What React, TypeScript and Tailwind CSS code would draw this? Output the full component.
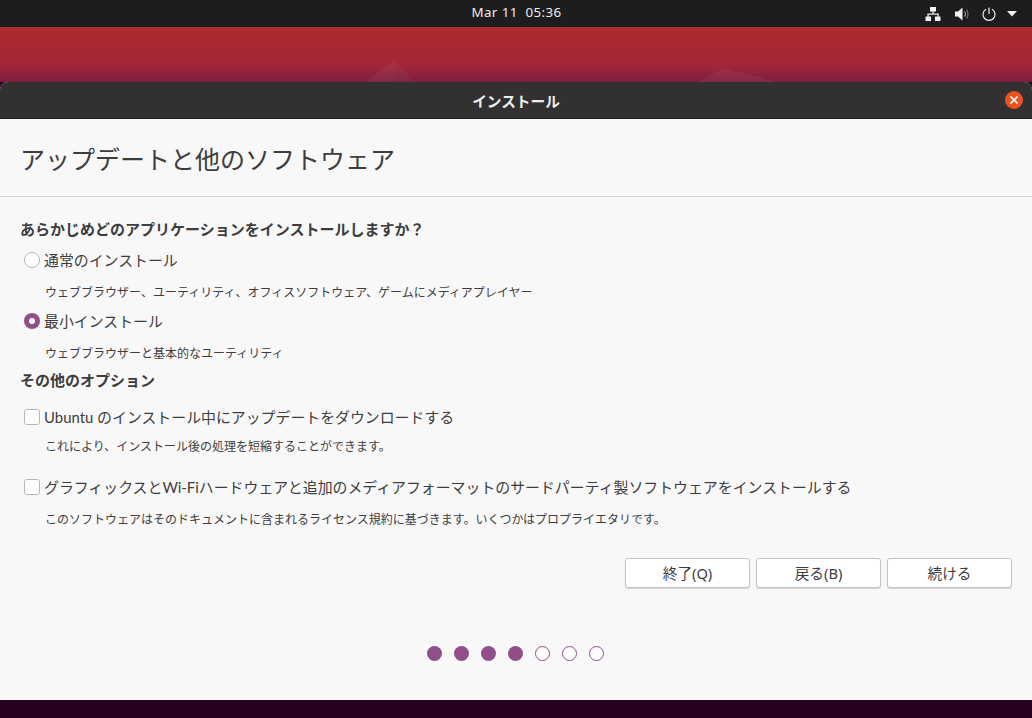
import React from "react";

const cjk = "font-['Noto_Sans','Noto_Sans_CJK_JP',sans-serif]";

function Radio({ checked }: { checked?: boolean }) {
  return checked ? (
    <span className="flex h-4 w-4 shrink-0 items-center justify-center rounded-full bg-[#924d8b]">
      <span className="h-1.5 w-1.5 rounded-full bg-white" />
    </span>
  ) : (
    <span className="h-4 w-4 shrink-0 rounded-full border border-[#b6b6b3] bg-white" />
  );
}

function Option({ checked, label, desc }: { checked?: boolean; label: string; desc: string }) {
  return (
    <div>
      <div className="flex h-[22px] items-center gap-[4px] pl-[4px]">
        <Radio checked={checked} />
        <span className="text-[14.9px] leading-[22px] text-[#3d3d3d]">{label}</span>
      </div>
      <div className="mt-[13px] h-[18px] pl-[25px] text-[12px] leading-[18px] text-[#3d3d3d]">{desc}</div>
    </div>
  );
}

function Check({ label, desc, className, gap }: { label: string; desc: string; className?: string; gap: string }) {
  return (
    <div className={className}>
      <div className="flex h-[22px] items-center gap-[4px] pl-[4px]">
        <span className="h-4 w-4 shrink-0 rounded-[3px] border border-[#b6b6b3] bg-white" />
        <span className="font-['Lato','Noto_Sans_CJK_JP',sans-serif] text-[14.9px] leading-[22px] text-[#3d3d3d]">{label}</span>
      </div>
      <div className={`${gap} h-[18px] pl-[25px] text-[12px] leading-[18px] text-[#3d3d3d]`}>{desc}</div>
    </div>
  );
}

function Btn({ children }: { children: React.ReactNode }) {
  return (
    <button className="h-[30px] w-[125px] rounded-[3px] border border-[#c4c4c1] bg-white text-[14.67px] leading-none text-[#3d3d3d] shadow-[0_1px_1px_rgba(0,0,0,0.15)]">
      {children}
    </button>
  );
}

export default function App() {
  return (
    <div className={`flex h-[718px] w-[1032px] flex-col overflow-hidden bg-[#27001e] ${cjk}`}>
      <div className="relative flex h-[27px] shrink-0 items-center justify-center bg-[#1d1d1d] pb-[1px] pl-[1px] text-[13.33px] tracking-[0.4px] text-[#ececec]">
        <span>Mar 11&nbsp;&nbsp;05:36</span>
        <div className="absolute right-[15px] top-0 flex h-[27px] items-center text-[#f2f2f2]">
          <svg width="16" height="16" viewBox="0 0 16 16" fill="currentColor" className="mr-[13px]">
            <rect x="5" y="1" width="6" height="4.5" />
            <rect x="7.5" y="5" width="1.2" height="3" />
            <rect x="2.5" y="7.5" width="11" height="1.2" />
            <rect x="2.5" y="8" width="1.2" height="3" />
            <rect x="12.5" y="8" width="1.2" height="3" />
            <rect x="0.5" y="10.5" width="5.5" height="4.5" />
            <rect x="10" y="10.5" width="5.5" height="4.5" />
          </svg>
          <svg width="16" height="16" viewBox="0 0 16 16" fill="currentColor" className="mr-[11px]">
            <path d="M1 5.5h3L8.5 1.5v13L4 10.5H1z" />
            <path d="M10.5 5.5c1.2 1.3 1.2 3.7 0 5" fill="none" stroke="currentColor" strokeWidth="1.1" opacity="0.75" />
            <path d="M12.5 3.5c2 2.4 2 6.6 0 9" fill="none" stroke="currentColor" strokeWidth="1.1" opacity="0.45" />
          </svg>
          <svg width="16" height="16" viewBox="0 0 16 16" fill="none" stroke="currentColor" strokeWidth="1.2" className="mr-[10px]">
            <path d="M8 1.5v6.5" />
            <path d="M5 3.2a6 6 0 1 0 6 0" />
          </svg>
          <svg width="10" height="6" viewBox="0 0 10 6" fill="currentColor">
            <path d="M0 0h10L5 5.5z" />
          </svg>
        </div>
      </div>

      <div className="relative h-[55px] shrink-0 overflow-hidden bg-[linear-gradient(180deg,#ad2a2d_0%,#a2263a_70%,#7c1e3b_100%)]">
        <svg className="absolute left-0 top-0" width="1032" height="55" viewBox="0 0 1032 55">
          <path d="M365 55L395 33L415 55z" fill="#ffffff" opacity="0.05" />
          <path d="M395 33L395 55L415 55z" fill="#000000" opacity="0.03" />
          <path d="M698 55L724 41L776 55z" fill="#ffffff" opacity="0.05" />
        </svg>
      </div>

      <div className="flex h-[618px] shrink-0 flex-col overflow-hidden rounded-t-[8px] bg-[#f8f8f8]">
        <div className="relative flex h-[37px] shrink-0 items-center justify-center border-b border-[#1f1f1f] bg-[#323030] pt-[1px] text-[14.67px] font-bold text-[#efefef]">
          インストール
          <span className="absolute right-[9px] top-[9px] flex h-[18px] w-[18px] items-center justify-center rounded-full bg-[#e95420]">
            <svg width="10" height="10" viewBox="0 0 10 10" stroke="#ffffff" strokeWidth="1.6" fill="none">
              <path d="M1.5 1.5l7 7M8.5 1.5l-7 7" />
            </svg>
          </span>
        </div>

        <div className="flex h-[78px] shrink-0 items-center border-b border-[#d9d9d9] pl-[20px] pt-[4px] text-[25px] leading-none text-[#3d3d3d]">
          アップデートと他のソフトウェア
        </div>

        <div className="flex flex-1 flex-col pl-[20px] pr-[20px]">
          <div className="mt-[21px] h-[22px] text-[15px] font-bold leading-[22px] text-[#3d3d3d]">
            あらかじめどのアプリケーションをインストールしますか？
          </div>
          <div className="mt-[9px]">
            <Option label="通常のインストール" desc="ウェブブラウザー、ユーティリティ、オフィスソフトウェア、ゲームにメディアプレイヤー" />
          </div>
          <div className="mt-[8px]">
            <Option checked label="最小インストール" desc="ウェブブラウザーと基本的なユーティリティ" />
          </div>
          <div className="mt-[6px] h-[22px] text-[15px] font-bold leading-[22px] text-[#3d3d3d]">その他のオプション</div>
          <Check
            className="mt-[15px]"
            gap="mt-[10px]"
            label="Ubuntu のインストール中にアップデートをダウンロードする"
            desc="これにより、インストール後の処理を短縮することができます。"
          />
          <Check
            className="mt-[20px]"
            gap="mt-[13px]"
            label="グラフィックスとWi-Fiハードウェアと追加のメディアフォーマットのサードパーティ製ソフトウェアをインストールする"
            desc="このソフトウェアはそのドキュメントに含まれるライセンス規約に基づきます。いくつかはプロプライエタリです。"
          />
          <div className="mt-[29px] flex justify-end gap-[6px]">
            <Btn>終了(Q)</Btn>
            <Btn>戻る(B)</Btn>
            <Btn>続ける</Btn>
          </div>
          <div className="mt-[58px] flex justify-center gap-[12px] pr-[1px]">
            {[1, 1, 1, 1, 0, 0, 0].map((f, i) => (
              <span
                key={i}
                className={f ? "h-[15px] w-[15px] rounded-full bg-[#924d8b]" : "h-[15px] w-[15px] rounded-full border border-[#924d8b] bg-white"}
              />
            ))}
          </div>
        </div>
      </div>
    </div>
  );
}
